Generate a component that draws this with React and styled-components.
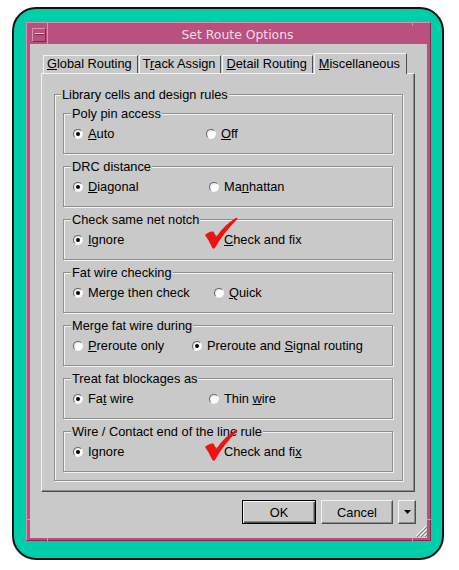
import React from "react";
import styled, { createGlobalStyle, css } from "styled-components";

const FACE = "#c9c9c9";
const LIGHT = "#f3f3f3";
const DARK = "#4d4d4d";
const MID = "#8c8c8c";
const PINK = "#b9507d";
const PINK_LIGHT = "#dc8fb0";
const PINK_DARK = "#7c2b4d";

const GlobalStyle = createGlobalStyle`
  html, body {
    margin: 0;
    padding: 0;
    background: #fff;
  }
  body {
    font-family: "Liberation Sans", Arial, sans-serif;
    font-size: 12.8px;
    color: #000;
  }
`;

const Screen = styled.div`
  width: 459px;
  height: 570px;
  box-sizing: border-box;
  padding: 7px 0 0 12px;
`;

const Callout = styled.div`
  box-sizing: border-box;
  width: 432px;
  height: 553px;
  background: #00cda9;
  border: 2px solid #141414;
  border-radius: 24px;
  padding: 13px 11px 17px 12px;
`;

const Frame = styled.div`
  position: relative;
  box-sizing: border-box;
  height: 100%;
  background: ${PINK};
  border: 1px solid;
  border-color: ${PINK_LIGHT} ${PINK_DARK} ${PINK_DARK} ${PINK_LIGHT};
  padding: 3px 3px 2px 3px;
  display: flex;
  flex-direction: column;
`;

const Notch = styled.span`
  position: absolute;
  background: ${PINK_LIGHT};
  ${(p) => (p.$vertical ? css`width: 1px; height: 4px;` : css`width: 4px; height: 1px;`)}
`;

const TitleBar = styled.div`
  display: flex;
  height: 18px;
  flex: none;
`;

const MenuCell = styled.div`
  box-sizing: border-box;
  width: 18px;
  border-right: 1px solid ${PINK_LIGHT};
  padding: 2px 0 0 2px;
`;

const MinButton = styled.div`
  box-sizing: border-box;
  width: 14px;
  height: 14px;
  border: 1px solid;
  border-color: ${PINK_LIGHT} ${PINK_DARK} ${PINK_DARK} ${PINK_LIGHT};
  display: flex;
  align-items: center;
  justify-content: center;
  padding-bottom: 3px;
`;

const Dash = styled.span`
  width: 9px;
  height: 1px;
  background: #f1c9da;
  box-shadow: 0 1px 0 ${PINK_DARK};
`;

const Title = styled.div`
  flex: 1;
  text-align: center;
  font-family: "DejaVu Sans", "Liberation Sans", sans-serif;
  font-size: 12.4px;
  line-height: 18px;
  color: #f7dce9;
`;

const Content = styled.div`
  position: relative;
  flex: 1;
  background: ${FACE};
  padding: 9px 12px 0 11px;
  display: flex;
  flex-direction: column;
`;

const TabBar = styled.div`
  display: flex;
  align-items: flex-end;
  gap: 1px;
  padding-left: 2px;
  position: relative;
  z-index: 1;
`;

const Tab = styled.div`
  box-sizing: border-box;
  height: ${(p) => (p.$active ? 21 : 18)}px;
  margin-bottom: ${(p) => (p.$active ? -1 : 0)}px;
  padding: ${(p) => (p.$active ? "2px 6px 0 4px" : "0 5px 0 3px")};
  line-height: 16px;
  background: ${FACE};
  border-top: 1px solid ${LIGHT};
  border-left: 1px solid ${LIGHT};
  border-right: 1px solid ${DARK};
  white-space: nowrap;
`;

const Panel = styled.div`
  box-sizing: border-box;
  border: 1px solid;
  border-color: ${LIGHT} ${DARK} ${DARK} ${LIGHT};
  box-shadow: inset -1px -1px 0 ${MID};
  padding: 13px 11px 10px 12px;
`;

const Group = styled.fieldset`
  margin: 0;
  min-width: 0;
  border: 1px solid #8e8e8e;
  box-shadow: 1px 1px 0 ${LIGHT}, inset 1px 1px 0 ${LIGHT};
  ${(p) =>
    p.$outer
      ? css`
          padding: 4px 9px 8px 8px;
          display: flex;
          flex-direction: column;
          gap: 5px;
        `
      : css`
          padding: 5px 0 11px 9px;
        `}
`;

const Caption = styled.legend`
  padding: 0 1px;
  margin-left: -2px;
  line-height: 15px;
  background: ${FACE};
  white-space: nowrap;
`;

const Row = styled.div`
  display: grid;
  grid-template-columns: ${(p) => p.$split}px auto;
  height: 16px;
  line-height: 16px;
`;

const Option = styled.label`
  position: relative;
  display: inline-flex;
  align-items: center;
  gap: 5px;
  white-space: nowrap;
`;

const Radio = styled.span`
  position: relative;
  box-sizing: border-box;
  width: 10px;
  height: 10px;
  flex: none;
  border-radius: 50%;
  border: 1px solid;
  border-color: #6a6a6a #fafafa #fafafa #6a6a6a;
  background: radial-gradient(circle at 62% 62%, #ffffff 0 45%, #dedede 80%);
  &::after {
    content: "";
    display: ${(p) => (p.$on ? "block" : "none")};
    position: absolute;
    left: 2px;
    top: 2px;
    width: 4px;
    height: 4px;
    border-radius: 50%;
    background: #000;
  }
`;

const Key = styled.span`
  text-decoration: underline;
  text-underline-offset: 1px;
`;

const TickMark = styled.svg`
  position: absolute;
  left: -6px;
  top: -16px;
  pointer-events: none;
`;

const ButtonRow = styled.div`
  display: flex;
  justify-content: flex-end;
  gap: 5px;
  margin: 8px -1px 0 0;
`;

const Button = styled.button`
  box-sizing: border-box;
  width: ${(p) => p.$w}px;
  height: 24px;
  padding: 0;
  font: inherit;
  color: #000;
  background: ${FACE};
  border: 1px solid;
  border-color: ${LIGHT} ${DARK} ${DARK} ${LIGHT};
  box-shadow: inset -1px -1px 0 ${MID};
  display: flex;
  align-items: center;
  justify-content: center;
  ${(p) =>
    p.$default &&
    css`
      border-color: #000;
      box-shadow: inset 1px 1px 0 ${LIGHT}, inset -1px -1px 0 ${DARK},
        inset -2px -2px 0 ${MID};
    `}
`;

const Grip = styled.svg`
  position: absolute;
  right: 0;
  bottom: 1px;
`;

const groups = [
  {
    title: "Poly pin access",
    split: 133,
    options: [
      { text: "Auto", key: 0, on: true },
      { text: "Off", key: 0 },
    ],
  },
  {
    title: "DRC distance",
    split: 136,
    options: [
      { text: "Diagonal", key: 0, on: true },
      { text: "Manhattan", key: 2 },
    ],
  },
  {
    title: "Check same net notch",
    split: 136,
    options: [
      { text: "Ignore", key: 0, on: true },
      { text: "Check and fix", key: 0, tick: true },
    ],
  },
  {
    title: "Fat wire checking",
    split: 141,
    options: [
      { text: "Merge then check", key: 3, on: true },
      { text: "Quick", key: 0 },
    ],
  },
  {
    title: "Merge fat wire during",
    split: 119,
    options: [
      { text: "Preroute only", key: 0 },
      { text: "Preroute and Signal routing", key: 13, on: true },
    ],
  },
  {
    title: "Treat fat blockages as",
    split: 136,
    options: [
      { text: "Fat wire", key: 2, on: true },
      { text: "Thin wire", key: 5 },
    ],
  },
  {
    title: "Wire / Contact end of the line rule",
    split: 136,
    options: [
      { text: "Ignore", on: true },
      { text: "Check and fix", key: 12, tick: true },
    ],
  },
];

const tabs = [
  { text: "Global Routing", key: 0 },
  { text: "Track Assign", key: 1 },
  { text: "Detail Routing", key: 0 },
  { text: "Miscellaneous", key: 0, active: true },
];

// underline the mnemonic letter, like a Motif label
const Mnemonic = ({ text, at }) => {
  if (at === undefined) return text;
  return (
    <>
      {text.slice(0, at)}
      <Key>{text[at]}</Key>
      {text.slice(at + 1)}
    </>
  );
};

const Tick = () => (
  <TickMark width="36" height="34" viewBox="0 0 36 34">
    <path
      d="M2 19 Q6 15 10.5 15.5 L13.2 21 Q21 9 33.5 1.5 L34.6 3 Q21 16 11.6 32.5 L9.6 32.5 Q6.5 25 2 19 Z"
      fill="#ee1212"
    />
  </TickMark>
);

const App = () => {
  return (
    <Screen>
      <GlobalStyle />
      <Callout>
        <Frame>
          <Notch $vertical style={{ left: 20, top: -1 }} />
          <Notch $vertical style={{ right: 17, top: -1 }} />
          <Notch $vertical style={{ left: 20, bottom: -1 }} />
          <Notch $vertical style={{ right: 17, bottom: -1 }} />
          <Notch style={{ left: -1, bottom: 20 }} />
          <Notch style={{ right: -1, bottom: 20 }} />
          <TitleBar>
            <MenuCell>
              <MinButton>
                <Dash />
              </MinButton>
            </MenuCell>
            <Title>Set Route Options</Title>
          </TitleBar>
          <Content>
            <TabBar>
              {tabs.map((t) => (
                <Tab key={t.text} $active={t.active}>
                  <Mnemonic text={t.text} at={t.key} />
                </Tab>
              ))}
            </TabBar>
            <Panel>
              <Group $outer>
                <Caption>Library cells and design rules</Caption>
                {groups.map((g) => (
                  <Group key={g.title}>
                    <Caption>{g.title}</Caption>
                    <Row $split={g.split}>
                      {g.options.map((o) => (
                        <Option key={o.text}>
                          <Radio $on={o.on} />
                          <span>
                            <Mnemonic text={o.text} at={o.key} />
                          </span>
                          {o.tick && <Tick />}
                        </Option>
                      ))}
                    </Row>
                  </Group>
                ))}
              </Group>
            </Panel>
            <ButtonRow>
              <Button $w={74} $default>
                OK
              </Button>
              <Button $w={72}>Cancel</Button>
              <Button $w={18}>
                <svg width="7" height="4" viewBox="0 0 7 4">
                  <path d="M0 0 H7 L3.5 4 Z" fill="#000" />
                </svg>
              </Button>
            </ButtonRow>
            <Grip width="12" height="12" viewBox="0 0 12 12">
              <path d="M11 1 L1 11 M11 5 L5 11 M11 9 L9 11" stroke="#f3f3f3" />
              <path d="M12 2 L2 12 M12 6 L6 12 M12 10 L10 12" stroke="#7a7a7a" />
            </Grip>
          </Content>
        </Frame>
      </Callout>
    </Screen>
  );
};

export default App;
